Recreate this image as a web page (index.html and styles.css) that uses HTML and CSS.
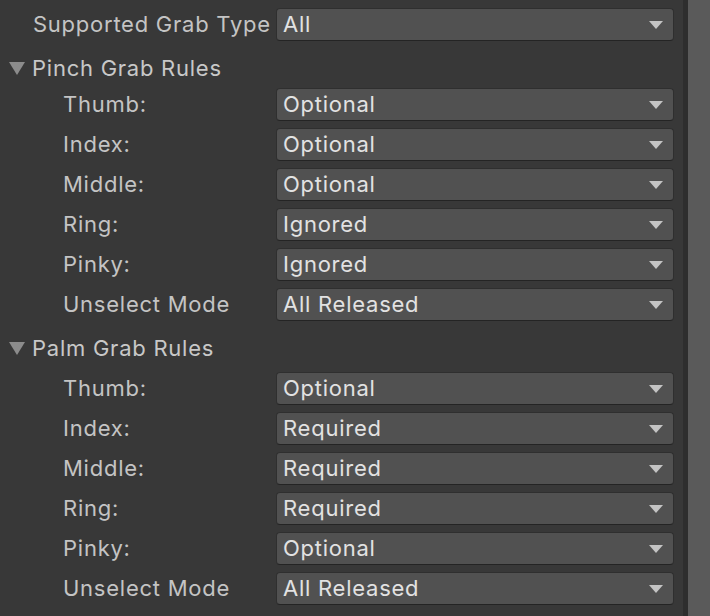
FILE: index.html
```html
<!DOCTYPE html>
<html>
<head>
<meta charset="utf-8">
<link rel="stylesheet" href="styles.css">
</head>
<body>
<div class="window">
  <div class="inspector">
    <div class="field">
      <span class="label">Supported Grab Type</span>
      <div class="dropdown"><span>All</span><i class="arrow"></i></div>
    </div>

    <div class="foldout"><i class="fold-tri"></i><span>Pinch Grab Rules</span></div>
    <div class="group">
      <div class="field nested"><span class="label">Thumb:</span><div class="dropdown"><span>Optional</span><i class="arrow"></i></div></div>
      <div class="field nested"><span class="label">Index:</span><div class="dropdown"><span>Optional</span><i class="arrow"></i></div></div>
      <div class="field nested"><span class="label">Middle:</span><div class="dropdown"><span>Optional</span><i class="arrow"></i></div></div>
      <div class="field nested"><span class="label">Ring:</span><div class="dropdown"><span>Ignored</span><i class="arrow"></i></div></div>
      <div class="field nested"><span class="label">Pinky:</span><div class="dropdown"><span>Ignored</span><i class="arrow"></i></div></div>
      <div class="field nested"><span class="label">Unselect Mode</span><div class="dropdown"><span>All Released</span><i class="arrow"></i></div></div>
    </div>

    <div class="foldout"><i class="fold-tri"></i><span>Palm Grab Rules</span></div>
    <div class="group spaced">
      <div class="field nested"><span class="label">Thumb:</span><div class="dropdown"><span>Optional</span><i class="arrow"></i></div></div>
      <div class="field nested"><span class="label">Index:</span><div class="dropdown"><span>Required</span><i class="arrow"></i></div></div>
      <div class="field nested"><span class="label">Middle:</span><div class="dropdown"><span>Required</span><i class="arrow"></i></div></div>
      <div class="field nested"><span class="label">Ring:</span><div class="dropdown"><span>Required</span><i class="arrow"></i></div></div>
      <div class="field nested"><span class="label">Pinky:</span><div class="dropdown"><span>Optional</span><i class="arrow"></i></div></div>
      <div class="field nested"><span class="label">Unselect Mode</span><div class="dropdown"><span>All Released</span><i class="arrow"></i></div></div>
    </div>
  </div>
  <div class="divider"></div>
  <div class="scrollbar"></div>
</div>
</body>
</html>
```

FILE: styles.css
```css
* { box-sizing: border-box; }
html, body {
  margin: 0;
  padding: 0;
  height: 100%;
  background: #383838;
}
body {
  font-family: Inter, "Noto Sans", sans-serif;
  font-size: 22px;
  letter-spacing: 0.75px;
  color: #c4c4c4;
}
.window {
  display: flex;
  height: 616px;
  overflow: hidden;
}
.inspector {
  flex: 1;
  padding: 8px 9px 0 0;
  display: flex;
  flex-direction: column;
}
.divider {
  width: 5px;
  background: #2e2e2e;
}
.scrollbar {
  width: 22px;
  background: #5a5a5a;
}
.field {
  height: 40px;
  display: flex;
  align-items: flex-start;
}
.label {
  width: 276px;
  flex: none;
  padding-left: 33px;
  height: 33px;
  line-height: 33px;
  white-space: nowrap;
  overflow: hidden;
}
.nested .label {
  padding-left: 63px;
}
.dropdown {
  flex: 1;
  height: 33px;
  background: #515151;
  border: 1px solid #2f2f2f;
  border-bottom-color: #242424;
  border-radius: 4px;
  display: flex;
  align-items: center;
  justify-content: space-between;
  padding: 0 10px 0 6px;
  color: #e2e2e2;
}
.dropdown span {
  margin-top: -2px;
}
.arrow {
  width: 0;
  height: 0;
  border-left: 7px solid transparent;
  border-right: 7px solid transparent;
  border-top: 8px solid #c4c4c4;
}
.foldout {
  height: 40px;
  display: flex;
  align-items: center;
  padding-left: 9px;
}
.group.spaced { margin-top: 4px; }
.fold-tri {
  width: 0;
  height: 0;
  border-left: 8.5px solid transparent;
  border-right: 8.5px solid transparent;
  border-top: 13px solid #8c8c8c;
  margin-right: 7px;
  margin-top: 1px;
}
.foldout span { color: #c8c8c8; }
```
